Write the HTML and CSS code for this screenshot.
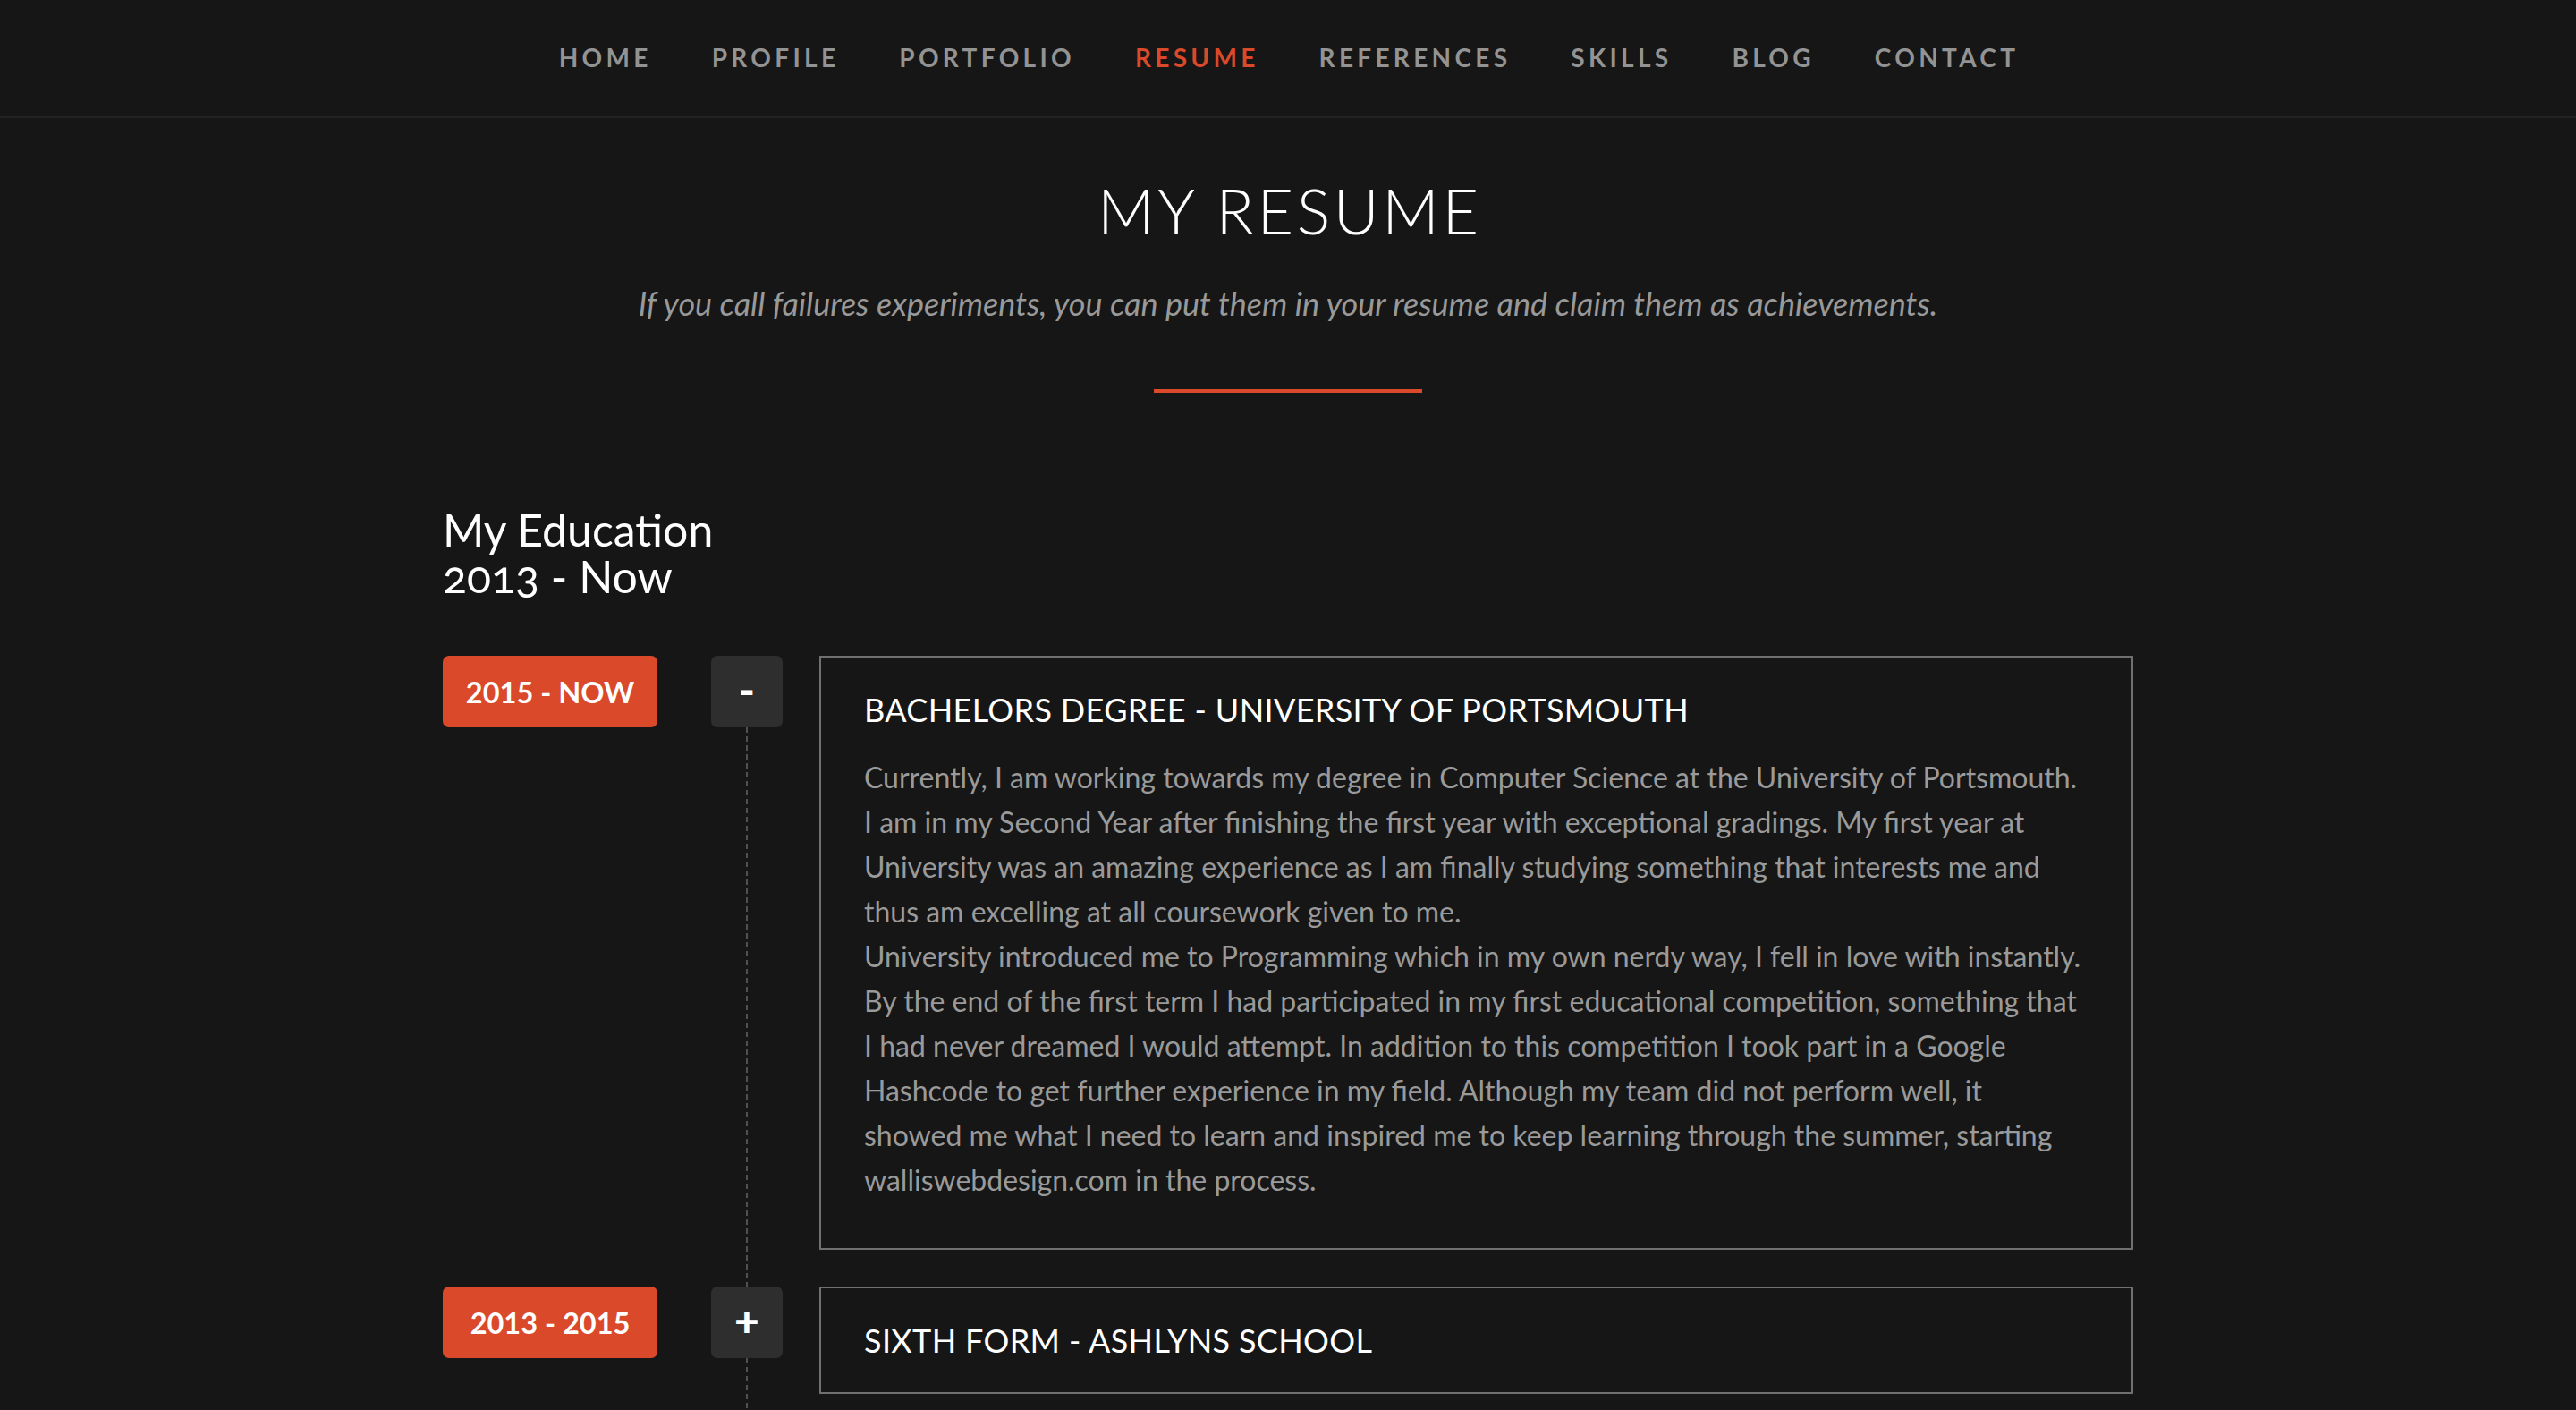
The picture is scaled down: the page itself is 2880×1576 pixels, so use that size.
FILE: index.html
```html
<!DOCTYPE html>
<html lang="en">
<head>
<meta charset="utf-8">
<title>My Resume</title>
<link rel="stylesheet" href="styles.css">
</head>
<body>
<header class="topbar">
  <nav class="nav">
    <a class="nav-link" href="#">HOME</a>
    <a class="nav-link" href="#">PROFILE</a>
    <a class="nav-link" href="#">PORTFOLIO</a>
    <a class="nav-link active" href="#">RESUME</a>
    <a class="nav-link" href="#">REFERENCES</a>
    <a class="nav-link" href="#">SKILLS</a>
    <a class="nav-link" href="#">BLOG</a>
    <a class="nav-link" href="#">CONTACT</a>
  </nav>
</header>
<main class="resume">
  <section class="intro">
    <h1 class="page-title">MY RESUME</h1>
    <p class="tagline">If you call failures experiments, you can put them in your resume and claim them as achievements.</p>
    <div class="rule"></div>
  </section>
  <section class="container">
    <h2 class="section-title"><span class="title-line">My Education</span><span class="title-line">2013 - Now</span></h2>
    <div class="timeline">
      <div class="entry">
        <div class="date">2015 - NOW</div>
        <div class="marker">
          <button class="toggle">-</button>
          <div class="rail"></div>
        </div>
        <article class="card">
          <h3 class="card-title">BACHELORS DEGREE - UNIVERSITY OF PORTSMOUTH</h3>
          <p class="card-text">Currently, I am working towards my degree in Computer Science at the University of Portsmouth. I am in my Second Year after finishing the first year with exceptional gradings. My first year at University was an amazing experience as I am finally studying something that interests me and thus am excelling at all coursework given to me.<br>University introduced me to Programming which in my own nerdy way, I fell in love with instantly. By the end of the first term I had participated in my first educational competition, something that I had never dreamed I would attempt. In addition to this competition I took part in a Google Hashcode to get further experience in my field. Although my team did not perform well, it showed me what I need to learn and inspired me to keep learning through the summer, starting walliswebdesign.com in the process.</p>
        </article>
      </div>
      <div class="entry">
        <div class="date">2013 - 2015</div>
        <div class="marker">
          <button class="toggle">+</button>
          <div class="rail"></div>
        </div>
        <article class="card">
          <h3 class="card-title">SIXTH FORM - ASHLYNS SCHOOL</h3>
        </article>
      </div>
    </div>
  </section>
</main>
</body>
</html>
```
FILE: styles.css
```css
* { box-sizing: border-box; }
html, body {
  margin: 0;
  padding: 0;
  background: #161616;
  color: #fff;
  font-family: Lato, "Liberation Sans", sans-serif;
}
.topbar {
  height: 132px;
  padding-bottom: 3px;
  border-bottom: 2px solid #222;
  display: flex;
  align-items: center;
  justify-content: center;
}
.nav {
  display: flex;
  gap: 67px;
  padding-left: 2px;
}
.nav-link {
  color: #939393;
  text-decoration: none;
  font-weight: 700;
  font-size: 28px;
  letter-spacing: 4.3px;
}
.nav-link.active { color: #d9492a; }
.resume { padding-bottom: 200px; }
.intro {
  display: flex;
  flex-direction: column;
  align-items: center;
  padding-top: 61px;
}
.page-title {
  margin: 0;
  font-weight: 300;
  font-size: 70px;
  line-height: 84px;
  letter-spacing: 3.6px;
  padding-left: 3.6px;
}
.tagline {
  margin: 41px 0 0;
  font-style: italic;
  font-size: 36px;
  line-height: 43px;
  color: #999;
}
.rule {
  width: 300px;
  height: 4px;
  background: #d9492a;
  margin-top: 74px;
}
.container {
  width: 1890px;
  margin: 127px auto 0;
}
.section-title {
  margin: 0;
  display: flex;
  flex-direction: column;
  font-weight: 400;
  font-size: 50px;
  line-height: 52px;
  font-variant-numeric: oldstyle-nums;
}
.title-line { display: block; }
.timeline { margin-top: 63px; }
.entry {
  display: grid;
  grid-template-columns: 300px 121px 1fr;
}
.date {
  width: 240px;
  height: 80px;
  background: #d9492a;
  border-radius: 7px;
  display: flex;
  align-items: center;
  justify-content: center;
  font-weight: 700;
  font-size: 32.5px;
  color: #fff;
}
.marker {
  width: 80px;
  display: flex;
  flex-direction: column;
  align-items: center;
}
.toggle {
  width: 80px;
  height: 80px;
  flex: none;
  border: 0;
  border-radius: 7px;
  background: #2e2e2e;
  color: #fff;
  font-family: Lato, sans-serif;
  font-weight: 900;
  font-size: 48px;
  line-height: 1;
  padding: 0 0 4px;
}
.rail {
  flex: 1;
  width: 2px;
  background: repeating-linear-gradient(to bottom, #505050 0 6px, transparent 6px 10px);
}
.card {
  border: 2px solid #707070;
  padding: 37px 55px 37px 48px;
  margin-bottom: 41px;
  width: 1469px;
}
.card-title {
  margin: 0;
  font-weight: 400;
  font-size: 36px;
  line-height: 42px;
  letter-spacing: 0.35px;
  color: #fff;
}
.card-text {
  margin: 30px 0 14px;
  font-size: 32px;
  line-height: 50px;
  color: #9a9a9a;
}
```
